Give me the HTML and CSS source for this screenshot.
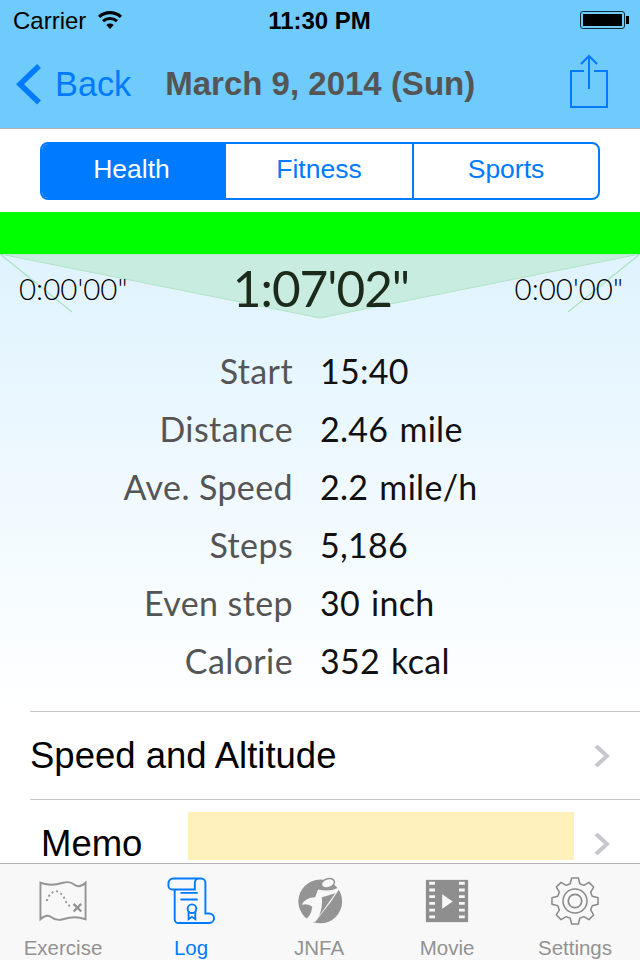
FILE: index.html
```html
<!DOCTYPE html>
<html lang="en">
<head>
    <meta charset="UTF-8">
    <meta name="viewport" content="width=device-width, initial-scale=1.0">
    <title>March 9, 2014 (Sun)</title>
    <link rel="stylesheet" href="styles.css">
</head>
<body>
    <div class="app">
        <header class="top-bar">
            <div class="status-bar">
                <div class="status-left">
                    <span>Carrier</span>
                    <svg class="wifi-icon" width="24" height="18" viewBox="0 0 24 18">
                        <path d="M12 18 L8.3 13.9 A5.5 5.5 0 0 1 15.7 13.9 Z" fill="#000"/>
                        <path d="M5 10.2 A10.5 10.5 0 0 1 19 10.2" fill="none" stroke="#000" stroke-width="3"/>
                        <path d="M1.1 5.9 A16.3 16.3 0 0 1 22.9 5.9" fill="none" stroke="#000" stroke-width="3.2"/>
                    </svg>
                </div>
                <div class="status-time">11:30 PM</div>
                <div class="battery"><div class="battery-fill"></div></div>
            </div>
            <nav class="nav-bar">
                <a class="back-link">
                    <svg width="26" height="41" viewBox="0 0 26 41">
                        <path d="M23 2 L4 20.2 L23 38.5" fill="none" stroke="#007aff" stroke-width="5.5"/>
                    </svg>
                    <span>Back</span>
                </a>
                <h1 class="nav-title">March 9, 2014 (Sun)</h1>
                <svg class="share-icon" width="40" height="55" viewBox="0 0 40 55">
                    <path d="M15 17 H2 V53 H38 V17 H25" fill="none" stroke="#007aff" stroke-width="2"/>
                    <path d="M20 35 V2 M12 10 L20 2 L28 10" fill="none" stroke="#007aff" stroke-width="2"/>
                </svg>
            </nav>
        </header>

        <main class="content">
            <div class="segment-wrap">
                <div class="segment">
                    <div class="segment-item active">Health</div>
                    <div class="segment-item">Fitness</div>
                    <div class="segment-item">Sports</div>
                </div>
            </div>

            <div class="green-bar"></div>

            <section class="summary">
                <svg class="gauge" width="640" height="66" viewBox="0 0 640 66">
                    <polygon points="0,0 640,0 320,64" fill="#c8ecdf" stroke="#b0e4c4" stroke-width="1"/>
                    <path d="M0 0 L72 58 M640 0 L568 58" stroke="#a8e2bc" stroke-width="1.2" fill="none"/>
                </svg>
                <div class="timer-row">
                    <span class="timer-side">0:00'00"</span>
                    <span class="timer-main">1:07'02"</span>
                    <span class="timer-side">0:00'00"</span>
                </div>
                <dl class="stats">
                    <div class="stat-row"><dt>Start</dt><dd>15:40</dd></div>
                    <div class="stat-row"><dt>Distance</dt><dd>2.46 mile</dd></div>
                    <div class="stat-row"><dt>Ave. Speed</dt><dd>2.2 mile/h</dd></div>
                    <div class="stat-row"><dt>Steps</dt><dd>5,186</dd></div>
                    <div class="stat-row"><dt>Even step</dt><dd>30 inch</dd></div>
                    <div class="stat-row"><dt>Calorie</dt><dd>352 kcal</dd></div>
                </dl>
            </section>

            <div class="list">
                <div class="list-row">
                    <span class="list-title">Speed and Altitude</span>
                    <svg class="chevron" width="18" height="26" viewBox="0 0 18 26">
                        <path d="M3 3 L14 13 L3 23" fill="none" stroke="#c7c7cc" stroke-width="4"/>
                    </svg>
                </div>
                <div class="list-row memo-row">
                    <span class="memo-label">Memo</span>
                    <div class="memo-box"></div>
                    <svg class="chevron" width="18" height="26" viewBox="0 0 18 26">
                        <path d="M3 3 L14 13 L3 23" fill="none" stroke="#c7c7cc" stroke-width="4"/>
                    </svg>
                </div>
            </div>
        </main>

        <footer class="tab-bar">
            <div class="tab">
                <svg width="50" height="50" viewBox="0 0 50 50">
                    <path d="M1.5 6 Q8 8 13 8 T25 6 T37 8 T48.5 6 V44 Q42 42 37 42 T25 44 T13 42 T1.5 44 Z" fill="none" stroke="#949494" stroke-width="2"/>
                    <path d="M8 25 Q12 14 19 15 Q25 17 29 28 L34 32" fill="none" stroke="#949494" stroke-width="2" stroke-dasharray="2 3"/>
                    <path d="M36 28 L44 36 M44 28 L36 36" fill="none" stroke="#949494" stroke-width="2.4"/>
                </svg>
                <span>Exercise</span>
            </div>
            <div class="tab active">
                <svg width="50" height="50" viewBox="0 0 50 50">
                    <path d="M8 13 V44 A4 4 0 0 0 12 48 H44 A5 5 0 0 0 44 38 H40 V6 A4.5 4.5 0 0 0 35.5 1.5 H6.5 A5 5 0 0 0 1.5 6.5 V9 A4 4 0 0 0 5.5 13 H29 V6 A4.5 4.5 0 0 1 33.5 1.5" fill="none" stroke="#007aff" stroke-width="2"/>
                    <path d="M14 16.5 H32 M14 23.5 H32" fill="none" stroke="#007aff" stroke-width="2"/>
                    <circle cx="26" cy="33" r="4.5" fill="none" stroke="#007aff" stroke-width="2"/>
                    <path d="M22.5 36 V44 L26 41.5 L29.5 44 V36" fill="none" stroke="#007aff" stroke-width="2"/>
                </svg>
                <span>Log</span>
            </div>
            <div class="tab">
                <svg width="50" height="50" viewBox="0 0 50 50">
                    <circle cx="26.3" cy="25.5" r="22.8" fill="#949494"/>
                    <path d="M24 13 Q36 16 47.5 10.5 L38 25 L21 47 L7 47 Q17 42 18 31 Q14 27 7 29 Q11 21 21 21 Z" fill="#f8f8f8"/>
                    <path d="M28 21 L42 17 L25 41 Q29 31 28 21 Z" fill="#949494"/>
                    <ellipse cx="34.3" cy="6.5" rx="7" ry="4.6" transform="rotate(-18 34.3 6.5)" fill="#f8f8f8" stroke="#949494" stroke-width="1.6"/>
                </svg>
                <span>JNFA</span>
            </div>
            <div class="tab">
                <svg width="50" height="50" viewBox="0 0 50 50">
                    <rect x="3" y="3" width="44" height="44" fill="#8e8e8e"/>
                    <path d="M9.5 5 V46 M40.5 5 V46" fill="none" stroke="#f8f8f8" stroke-width="6" stroke-dasharray="3 4"/>
                    <polygon points="20,18 31,25.5 20,33" fill="#f8f8f8"/>
                </svg>
                <span>Movie</span>
            </div>
            <div class="tab">
                <svg width="50" height="50" viewBox="-25 -25 50 50">
                    <polygon points="-5,-18 -3.5,-24 3.5,-24 5,-18 9.2,-16.3 14.5,-19.4 19.4,-14.5 16.3,-9.2 18,-5 24,-3.5 24,3.5 18,5 16.3,9.2 19.4,14.5 14.5,19.4 9.2,16.3 5,18 3.5,24 -3.5,24 -5,18 -9.2,16.3 -14.5,19.4 -19.4,14.5 -16.3,9.2 -18,5 -24,3.5 -24,-3.5 -18,-5 -16.3,-9.2 -19.4,-14.5 -14.5,-19.4 -9.2,-16.3" fill="none" stroke="#8a8a8a" stroke-width="1.6" stroke-linejoin="round"/>
                    <circle r="12.5" fill="none" stroke="#8a8a8a" stroke-width="1.6"/>
                    <circle r="7" fill="none" stroke="#8a8a8a" stroke-width="1.8"/>
                </svg>
                <span>Settings</span>
            </div>
        </footer>
    </div>
</body>
</html>
```

FILE: styles.css
```css
* {
    margin: 0;
    padding: 0;
    box-sizing: border-box;
    font-family: 'Liberation Sans', Arial, sans-serif;
}

body {
    background-color: white;
}

.app {
    display: flex;
    flex-direction: column;
    width: 640px;
    height: 960px;
    overflow: hidden;
}

/* Status and navigation */
.top-bar {
    height: 129px;
    flex-shrink: 0;
    background-color: #6fcbfb;
    border-bottom: 1px solid #b2b2b2;
}

.status-bar {
    display: flex;
    align-items: center;
    justify-content: space-between;
    height: 40px;
    padding: 2px 14px 0 13px;
    font-size: 24px;
    color: #000;
}

.status-left {
    display: flex;
    align-items: center;
    gap: 12px;
    width: 160px;
}

.wifi-icon {
    margin-top: -2px;
}

.status-time {
    font-weight: bold;
}

.battery {
    position: relative;
    width: 45px;
    height: 18px;
    margin: -2px 1px 0 114px;
    padding: 2px;
    border: 1px solid #0a2a3a;
    border-radius: 3px;
}

.battery::after {
    content: "";
    position: absolute;
    right: -5px;
    top: 4px;
    width: 3px;
    height: 8px;
    background-color: #000;
}

.battery-fill {
    height: 100%;
    background-color: #000;
}

.nav-bar {
    display: flex;
    align-items: center;
    height: 88px;
    padding: 0 30px 0 16px;
}

.back-link {
    display: flex;
    align-items: center;
    gap: 13px;
    font-size: 34.3px;
    color: #007aff;
}

.nav-title {
    flex: 1;
    margin-left: 34px;
    font-size: 33px;
    font-weight: bold;
    color: #555;
}

.share-icon {
    margin-top: -5px;
    margin-right: 1px;
}

/* Segment */
.segment-wrap {
    padding: 13px 40px 12px;
}

.segment {
    display: flex;
    height: 58px;
    border: 2px solid #007aff;
    border-radius: 8px;
    overflow: hidden;
}

.segment-item {
    flex: 1;
    display: flex;
    align-items: center;
    justify-content: center;
    padding-bottom: 4px;
    font-size: 26.5px;
    color: #007aff;
}

.segment-item:nth-child(1) {
    flex: 0 0 184px;
    padding-right: 5px;
}

.segment-item:nth-child(2) {
    flex: 0 0 188px;
    border-right: 2px solid #007aff;
}

.segment-item.active {
    background-color: #007aff;
    color: white;
}

.green-bar {
    height: 42px;
    background-color: #00ff00;
}

/* Summary */
.summary {
    position: relative;
    height: 457px;
    background: linear-gradient(#dff3fe, #ffffff);
}

.gauge {
    position: absolute;
    top: 0;
    left: 0;
}

.timer-row {
    position: relative;
    display: flex;
    align-items: center;
    justify-content: space-between;
    height: 68px;
    padding: 0 17px 0 19px;
}

.timer-side {
    font-family: 'Lato', sans-serif;
    font-weight: 300;
    font-size: 29.5px;
    color: #000;
}

.timer-main {
    font-family: 'Lato', sans-serif;
    font-weight: 400;
    font-size: 49.5px;
    letter-spacing: -1px;
    color: #1c2a1c;
}

.stats {
    padding-top: 19px;
}

.stat-row {
    display: flex;
    align-items: center;
    gap: 27px;
    height: 58px;
}

.stat-row dt {
    width: 293px;
    text-align: right;
    font-family: 'Lato', sans-serif;
    font-size: 34px;
    letter-spacing: 0.4px;
    color: #555;
}

.stat-row dd {
    font-family: 'Lato', sans-serif;
    font-size: 34px;
    letter-spacing: 0.3px;
    word-spacing: 2px;
    color: #111;
}

/* List */
.list {
    padding-left: 30px;
}

.list-row {
    display: flex;
    align-items: center;
    justify-content: space-between;
    height: 88px;
    padding-right: 29px;
    border-top: 1px solid #c8c8c8;
}

.list-title {
    font-size: 36.5px;
    color: #000;
}

.memo-row {
    justify-content: flex-start;
}

.memo-row .chevron {
    margin-left: auto;
}

.memo-label {
    width: 147px;
    padding-left: 11px;
    font-size: 36.5px;
    color: #000;
}

.memo-box {
    align-self: flex-start;
    width: 386px;
    height: 48px;
    margin: 12px 0 0 11px;
    background-color: #fff1bd;
}

.content {
    flex: 1;
    overflow: hidden;
}

/* Tab bar */
.tab-bar {
    display: flex;
    height: 97px;
    flex-shrink: 0;
    padding: 13px 0 0 0;
    background-color: #f8f8f8;
    border-top: 1px solid #b2b2b2;
}

.tab {
    flex: 1;
    display: flex;
    flex-direction: column;
    align-items: center;
    gap: 11px;
    padding-right: 2px;
    font-size: 20.5px;
    color: #929292;
}

.tab.active {
    color: #007aff;
}
```
